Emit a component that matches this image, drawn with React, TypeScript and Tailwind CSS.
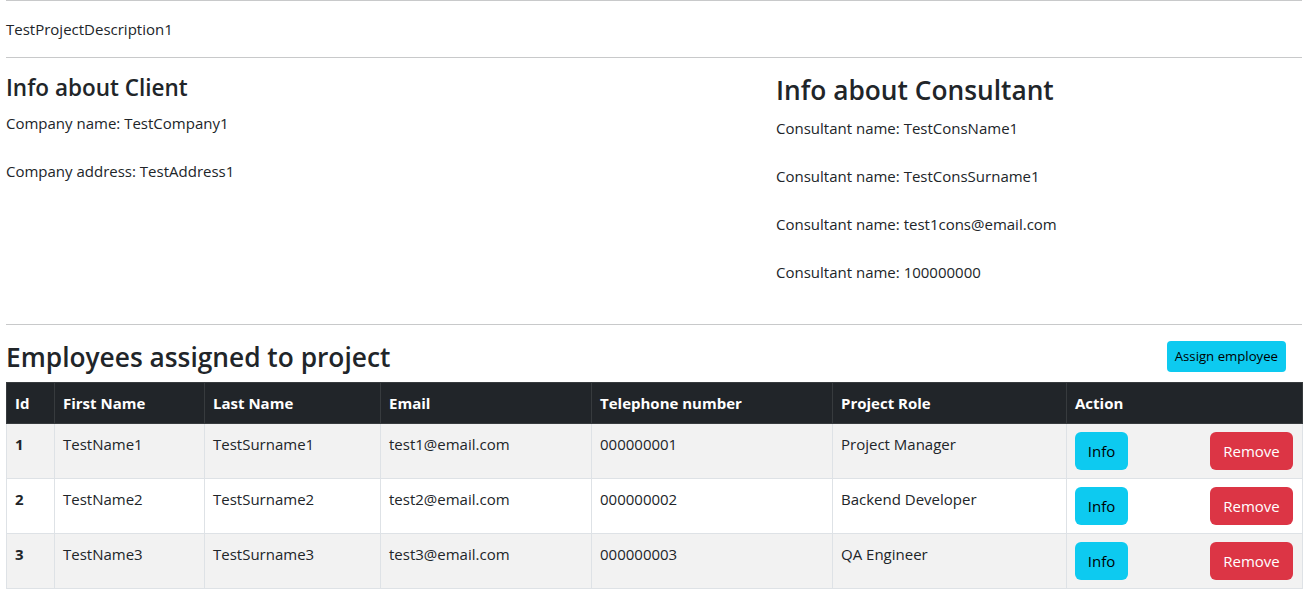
import React from 'react';

interface Employee {
  id: number;
  firstName: string;
  lastName: string;
  email: string;
  phone: string;
  role: string;
}

const employees: Employee[] = [
  { id: 1, firstName: 'TestName1', lastName: 'TestSurname1', email: 'test1@email.com', phone: '000000001', role: 'Project Manager' },
  { id: 2, firstName: 'TestName2', lastName: 'TestSurname2', email: 'test2@email.com', phone: '000000002', role: 'Backend Developer' },
  { id: 3, firstName: 'TestName3', lastName: 'TestSurname3', email: 'test3@email.com', phone: '000000003', role: 'QA Engineer' },
];

const consultantLines = ['TestConsName1', 'TestConsSurname1', 'test1cons@email.com', '100000000'];

const Divider = ({ className = '' }: { className?: string }) => (
  <div className={`h-px bg-[#c8c9ca] ${className}`} />
);

export default function App() {
  return (
    <div
      className="pl-[6px] pr-[14px] text-[15px] leading-6 text-[#212529] bg-white min-h-screen"
      style={{ fontFamily: '"Open Sans", "Noto Sans", Arial, sans-serif' }}
    >
      <Divider />
      <p className="mt-4 mb-4">TestProjectDescription1</p>
      <Divider />

      {/* client / consultant */}
      <div className="grid grid-cols-[770px_1fr] mt-4">
        <div>
          <h4 className="text-[22.5px] leading-[28.8px] font-semibold mb-2">Info about Client</h4>
          <p className="mb-6">Company name: TestCompany1</p>
          <p className="mb-6">Company address: TestAddress1</p>
        </div>
        <div>
          <h3 className="text-[26.3px] leading-[33.6px] font-semibold mb-2">Info about Consultant</h3>
          {consultantLines.map((v) => (
            <p key={v} className="mb-6">Consultant name: {v}</p>
          ))}
        </div>
      </div>

      <Divider className="mt-4" />

      {/* employees */}
      <div className="flex items-start justify-between mt-4 mb-2">
        <h3 className="text-[26.3px] leading-[33.6px] font-semibold">Employees assigned to project</h3>
        <button className="mr-4 h-[31px] px-2 rounded bg-[#0dcaf0] text-black text-[13.2px] leading-[21px]">
          Assign employee
        </button>
      </div>

      <table className="w-full table-fixed border-collapse">
        <colgroup>
          <col className="w-[48px]" />
          <col className="w-[150px]" />
          <col className="w-[176px]" />
          <col className="w-[211px]" />
          <col className="w-[241px]" />
          <col className="w-[234px]" />
          <col className="w-[236px]" />
        </colgroup>
        <thead>
          <tr className="bg-[#212529] text-white font-bold text-left">
            {['Id', 'First Name', 'Last Name', 'Email', 'Telephone number', 'Project Role', 'Action'].map((h) => (
              <th key={h} className="border border-[#373b3e] px-2 py-2 h-[41px] align-top">{h}</th>
            ))}
          </tr>
        </thead>
        <tbody>
          {employees.map((e, i) => (
            <tr key={e.id} className={i % 2 === 0 ? 'bg-[#f2f2f2]' : 'bg-white'}>
              <td className="border border-[#dee2e6] px-2 py-2 align-top font-bold">{e.id}</td>
              <td className="border border-[#dee2e6] px-2 py-2 align-top">{e.firstName}</td>
              <td className="border border-[#dee2e6] px-2 py-2 align-top">{e.lastName}</td>
              <td className="border border-[#dee2e6] px-2 py-2 align-top">{e.email}</td>
              <td className="border border-[#dee2e6] px-2 py-2 align-top">{e.phone}</td>
              <td className="border border-[#dee2e6] px-2 py-2 align-top">{e.role}</td>
              <td className="border border-[#dee2e6] pl-2 pr-[9px] py-2 align-top">
                <div className="flex justify-between">
                  <button className="h-[38px] w-[53px] rounded-md bg-[#0dcaf0] text-black">Info</button>
                  <button className="h-[38px] w-[83px] rounded-md bg-[#dc3545] text-white">Remove</button>
                </div>
              </td>
            </tr>
          ))}
        </tbody>
      </table>
    </div>
  );
}
